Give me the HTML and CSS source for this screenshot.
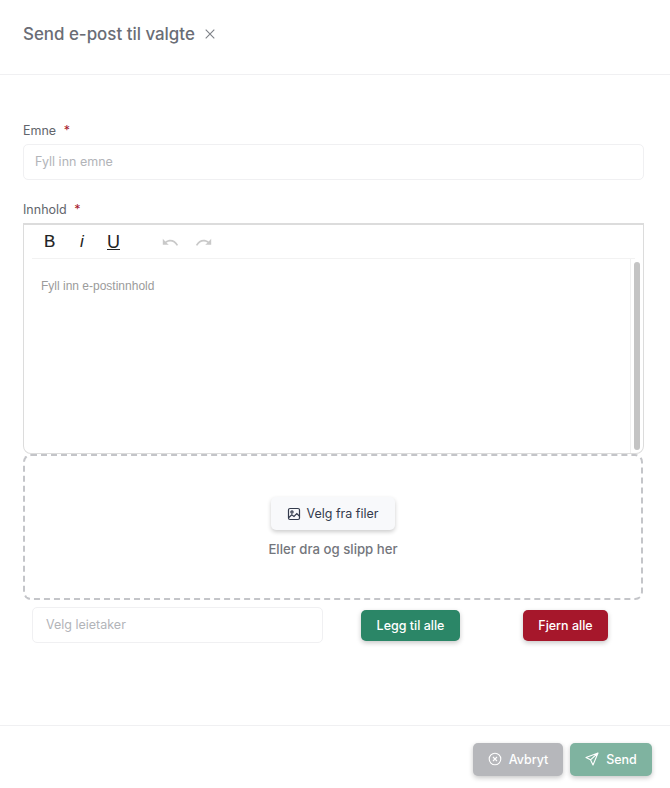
FILE: index.html
```html
<!DOCTYPE html>
<html>
<head lang="nb">
<meta charset="UTF-8">
<title>Send e-post til valgte</title>
<link rel="stylesheet" href="styles.css">
</head>
<body>
<div class="modal">
  <header class="modal-head">
    <h1>Send e-post til valgte</h1>
    <svg class="close-icon" width="10" height="10" viewBox="0 0 10 10"><path d="M.7.7l8.6 8.6M9.3.7L.7 9.3" stroke="#7d8087" stroke-width="1.1" fill="none"/></svg>
  </header>

  <main class="modal-body">
    <label class="field-label subject-label">Emne <span class="req">*</span></label>
    <div class="text-input subject-input">Fyll inn emne</div>

    <label class="field-label content-label">Innhold <span class="req">*</span></label>
    <div class="editor">
      <div class="toolbar">
        <span class="tool tool-b">B</span>
        <span class="tool tool-i">i</span>
        <span class="tool tool-u">U</span>
        <svg class="undo" width="22" height="12" viewBox="0 0 18 10"><path d="M3 2.2v5h5L6 5.6c3-1.8 6.400-1.200 8.600 2.600l1.200-.7C13.200 2.700 8.800 2 5.100 4.500z" fill="#c9c9c9"/></svg>
        <svg class="redo" width="22" height="12" viewBox="0 0 18 10"><path d="M15 2.200v5h-5l2-1.600c-3-1.800-6.400-1.200-8.600 2.600l-1.200-.7C4.800 2.700 9.200 2 12.900 4.500z" fill="#c9c9c9"/></svg>
      </div>
      <div class="editor-area">
        <p class="editor-placeholder">Fyll inn e-postinnhold</p>
        <div class="scroll-track"><div class="scroll-thumb"></div></div>
      </div>
    </div>

    <div class="dropzone">
      <button class="file-btn">
        <svg width="14" height="14" viewBox="0 0 14 14" fill="none" stroke="#343b4d" stroke-width="1.2"><rect x="1.500" y="1.500" width="11" height="11" rx="1.500"/><circle cx="5" cy="5" r="1.100"/><path d="M1.800 10.500l3-2.800 2.200 1.800 2.800-3 2.500 2.500"/></svg>
        Velg fra filer
      </button>
      <p class="drop-text">Eller dra og slipp her</p>
    </div>

    <div class="recipient-row">
      <div class="text-input recipient-input">Velg leietaker</div>
      <button class="btn btn-add">Legg til alle</button>
      <button class="btn btn-remove">Fjern alle</button>
    </div>
  </main>

  <footer class="modal-foot">
    <button class="btn btn-foot btn-cancel">
      <svg width="14" height="14" viewBox="0 0 14 14" fill="none" stroke="#fff" stroke-width="1.100"><circle cx="7" cy="7" r="5.800"/><path d="M5 5l4 4M9 5l-4 4"/></svg>
      Avbryt
    </button>
    <button class="btn btn-foot btn-send">
      <svg width="14" height="14" viewBox="0 0 14 14" fill="none" stroke="#fff" stroke-width="1.100" stroke-linejoin="round"><path d="M13 1L1 5.500l4.500 2.300L8 13zM13 1L5.500 7.800"/></svg>
      Send
    </button>
  </footer>
</div>
</body>
</html>
```
FILE: styles.css
```css
* {
  box-sizing: border-box;
}

body {
  margin: 0;
  background-color: #fff;
  font-family: "Inter", "Liberation Sans", sans-serif;
}

.modal {
  display: flex;
  flex-direction: column;
  width: 670px;
  height: 788px;
}

.modal-head {
  display: flex;
  align-items: center;
  gap: 10px;
  height: 75px;
  padding: 0 23px 7px;
  border-bottom: 1px solid #f0f0f2;
}

.modal-head h1 {
  margin: 0;
  font-size: 16.900px;
  font-weight: 500;
  color: #6a6d75;
}

.close-icon {
  margin-top: 1px;
}

.modal-body {
  flex: 1;
  padding: 48px 26px 0 23px;
}

.field-label {
  display: block;
  font-size: 12.500px;
  line-height: 16px;
  font-weight: 400;
  color: #62656c;
}

.req {
  margin-left: 4px;
  color: #a6172b;
}

.text-input {
  height: 36px;
  padding-left: 11px;
  border: 1px solid #f0f0f2;
  border-radius: 5px;
  font-size: 12.500px;
  line-height: 34px;
  color: #b2b4b9;
}

.subject-input {
  width: 621px;
  margin-top: 5px;
}

.content-label {
  margin-top: 22px;
}

.editor {
  width: 621px;
  height: 231px;
  margin-top: 5px;
  border: 1px solid #dcdcdc;
  border-top-width: 2px;
  border-radius: 0 0 8px 8px;
}

.toolbar {
  display: flex;
  align-items: center;
  height: 34px;
  margin: 0 8px;
  padding-left: 12px;
  border-bottom: 1px solid #f2f2f2;
  color: #222;
}

.tool {
  font-family: "Liberation Sans", sans-serif;
  font-size: 17px;
  line-height: 1;
}

.tool-b {
  width: 36px;
  font-weight: 400;
  -webkit-text-stroke: .2px #222;
}

.tool-i {
  width: 27px;
  font-style: italic;
}

.tool-u {
  width: 52px;
  font-size: 18px;
  text-decoration: underline;
}

.undo {
  margin-right: 12px;
}

.editor-area {
  position: relative;
  height: 194px;
}

.editor-placeholder {
  margin: 0;
  padding: 20px 17px;
  font-family: "Liberation Sans", sans-serif;
  font-size: 12px;
  line-height: 14px;
  color: #9b9b9b;
}

.scroll-track {
  position: absolute;
  top: 0;
  right: 0;
  bottom: 0;
  width: 13px;
  padding: 3px;
  border-left: 1px solid #f0f0f0;
}

.scroll-thumb {
  height: 100%;
  border-radius: 4px;
  background-color: #c4c4c4;
}

.dropzone {
  display: flex;
  flex-direction: column;
  align-items: center;
  width: 620px;
  height: 146px;
  padding-top: 41px;
  border: 2px dashed #c4c5c9;
  border-radius: 8px;
}

.file-btn {
  display: flex;
  align-items: center;
  gap: 6px;
  width: 124px;
  height: 33px;
  margin-left: -1px;
  padding: 0 0 0 16px;
  border: none;
  border-radius: 5px;
  background-color: #f8f9fb;
  box-shadow: 0 2px 4px rgba(0,0,0,.2);
  font-family: inherit;
  font-size: 12.500px;
  font-weight: 400;
  color: #343b4d;
}

.drop-text {
  margin: 10px 0 0;
  font-size: 13.200px;
  line-height: 18px;
  font-weight: 500;
  color: #74767c;
}

.recipient-row {
  display: flex;
  align-items: center;
  margin: 7px 0 0 9px;
}

.recipient-input {
  width: 291px;
  padding-left: 13px;
}

.btn {
  display: flex;
  align-items: center;
  justify-content: center;
  border: none;
  border-radius: 5px;
  box-shadow: 0 2px 5px rgba(0,0,0,.22);
  font-family: inherit;
  font-size: 12.500px;
  font-weight: 500;
  color: #fff;
}

.btn-add {
  width: 99px;
  height: 31px;
  margin-left: 38px;
  background-color: #2b8667;
}

.btn-remove {
  width: 85px;
  height: 31px;
  margin-left: 63px;
  background-color: #a6172b;
}

.modal-foot {
  display: flex;
  justify-content: flex-end;
  gap: 7px;
  height: 63px;
  padding: 17px 18px 0 0;
  border-top: 1px solid #f0f0f2;
}

.btn-foot {
  gap: 7px;
  height: 33px;
  padding-bottom: 2px;
}

.btn-cancel {
  width: 90px;
  background-color: #b6b7bb;
}

.btn-send {
  width: 82px;
  background-color: #7fb3a0;
}
```
